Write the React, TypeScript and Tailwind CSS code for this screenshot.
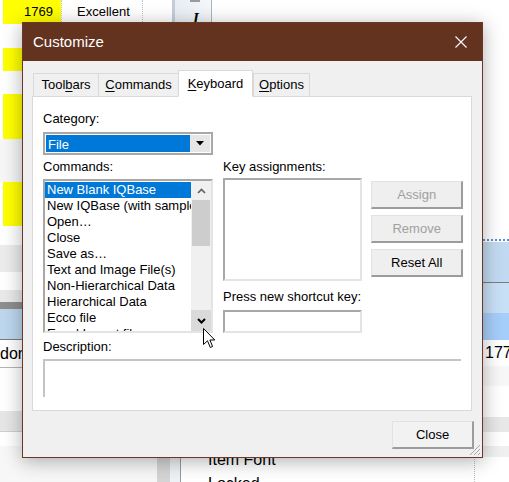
import React from "react";

const COMMANDS = [
  "New Blank IQBase",
  "New IQBase (with sample data)",
  "Open…",
  "Close",
  "Save as…",
  "Text and Image File(s)",
  "Non-Hierarchical Data",
  "Hierarchical Data",
  "Ecco file",
  "Excel Import file",
];

const btn =
  "flex items-center justify-center bg-[#efefef] border border-t-[#e2e2e2] border-l-[#e2e2e2] border-b-2 border-r-2 border-b-[#9c9c9c] border-r-[#9c9c9c] text-[13px]";

const sunken =
  "bg-white border-2 border-t-[#a8a8a8] border-l-[#a8a8a8] border-r-[#e4e4e4] border-b-[#e4e4e4]";

const Background = () => (
  <div className="flex flex-col h-full">
    <div className="flex h-[446px] shrink-0 overflow-hidden">
      {/* left column of the sheet */}
      <div className="w-[61px] shrink-0 flex flex-col">
        <div className="h-[24px] ml-[3px] bg-[#ffff00] flex items-center justify-end pr-[8px] text-[13px]">1769</div>
        <div className="h-[24px]" />
        <div className="h-[23px] ml-[3px] bg-[#ffff00]" />
        <div className="h-[23px]" />
        <div className="h-[45px] ml-[3px] bg-[#ffff00]" />
        <div className="h-[43px] bg-[#f6f6f6]" />
        <div className="h-[44px] ml-[3px] bg-[#ffff00]" />
        <div className="h-[19px]" />
        <div className="h-[27px] bg-[#ececec]" />
        <div className="h-[18px]" />
        <div className="h-[12px] bg-[#e9e9e9]" />
        <div className="h-[7px] bg-[#8e8e8e]" />
        <div className="h-[31px] bg-[#bdd7ee] border-b border-[#7a7a7a]" />
        <div className="h-[28px] flex items-center text-[16px] border-b border-[#b4b4b4]">dor</div>
        <div className="h-[43px]" />
        <div className="h-[21px] bg-[#e6e6e6] border-b border-[#cfcfcf]" />
      </div>
      {/* second column */}
      <div className="w-[111px] shrink-0 flex flex-col border-l border-dotted border-[#c8c8c8]">
        <div className="h-[24px] flex">
          <div className="w-[81px] flex items-center pl-[15px] text-[13px] border-r border-dotted border-[#c0c0c0]">Excellent</div>
        </div>
      </div>
      {/* toolbar strip */}
      <div className="w-[40px] shrink-0 flex flex-col border-l-[3px] border-[#c4cdd8] border-r border-r-[#b0b4b8] bg-gradient-to-r from-[#e9eef4] to-[#f4f7fa]">
        <div className="ml-[15px] w-[10px] h-[2px] bg-[#9a9a9a]" />
        <div className="pl-[18px] pt-[9px] text-[15px] font-bold italic font-['Liberation_Serif',serif] leading-none">I</div>
      </div>
      {/* right area */}
      <div className="flex-1 min-w-0 overflow-hidden flex flex-col">
        <div className="h-[239px]" />
        <div className="h-[3px] border-t-2 border-dotted border-[#5b8fd0]" />
        <div className="h-[41px] bg-[#c2daf1] border-b border-[#7d7d7d]" />
        <div className="h-[30px] bg-[#c8e0f6]" />
        <div className="h-[27px] bg-[#a6cefa]" />
        <div className="h-[26px] flex items-center pl-[273px] text-[16px] whitespace-nowrap">1775</div>
        <div className="h-[20px] bg-[#f7f7f7]" />
        <div className="h-[31px]" />
        <div className="h-[15px] bg-[#e8e8e8]" />
      </div>
    </div>
    <div className="flex flex-1 overflow-hidden">
      <div className="w-[157px] shrink-0 bg-[#f7f7f7]" />
      <div className="w-[13px] shrink-0 bg-[#d5d5d5]" />
      <div className="w-[11px] shrink-0 bg-[#eef1f5] border-r border-[#9a9a9a]" />
      <div className="w-[294px] shrink-0 border-r border-dotted border-[#b8b8b8] pt-[2px] text-[16px]">
        <div className="h-[24px] flex items-center pl-[27px]">Item Font</div>
        <div className="h-[24px] flex items-center pl-[27px]">Locked</div>
      </div>
      <div className="flex-1 flex flex-col">
        <div className="h-[11px] bg-[#f0f0f0]" />
      </div>
    </div>
  </div>
);

const Tab = ({ label, u, width, selected }: { label: string; u: number; width: string; selected?: boolean }) => (
  <div
    className={`${width} flex items-center justify-center border border-[#d9d9d9] text-[13px] ${
      selected ? "h-[27px] bg-white border-b-white relative z-10" : "h-[24px] bg-[#f0f0f0] -mr-px"
    }`}
  >
    <span>
      {label.slice(0, u)}
      <span className="underline underline-offset-2">{label[u]}</span>
      {label.slice(u + 1)}
    </span>
  </div>
);

const CommandList = () => (
  <div className={`${sunken} h-[154px] flex overflow-hidden`}>
    <div className="flex-1 overflow-hidden pt-px">
      {COMMANDS.map((c, i) => (
        <div
          key={c}
          className={`h-[16px] leading-[16px] pl-[2px] whitespace-nowrap text-[13px] ${
            i === 0 ? "bg-[#0078d7] text-white" : ""
          }`}
        >
          {c}
        </div>
      ))}
    </div>
    <div className="w-[20px] bg-[#f0f0f0] flex flex-col">
      <div className="h-[19px] flex items-center justify-center">
        <svg width="9" height="6" viewBox="0 0 9 6">
          <path d="M1 5 L4.5 1.5 L8 5" stroke="#606060" strokeWidth="1.6" fill="none" />
        </svg>
      </div>
      <div className="mx-[1px] h-[46px] bg-[#cdcdcd]" />
      <div className="flex-1" />
      <div className="h-[21px] bg-[#dadada] flex items-center justify-center">
        <svg width="9" height="6" viewBox="0 0 9 6">
          <path d="M1 1 L4.5 4.5 L8 1" stroke="#000" strokeWidth="2" fill="none" />
        </svg>
      </div>
    </div>
  </div>
);

const Dialog = () => (
  <div className="absolute left-[22px] top-[22px] w-[461px] h-[436px] border border-[#6a3823] bg-[#f0f0f0] shadow-[0_3px_18px_rgba(0,0,0,0.32)] flex flex-col">
    <div className="h-[38px] bg-[#633320] flex items-center justify-between pl-[10px] pr-[15px] text-white">
      <span className="text-[15px]">Customize</span>
      <svg width="12" height="12" viewBox="0 0 12 12">
        <path d="M0.5 0.5 L11.5 11.5 M11.5 0.5 L0.5 11.5" stroke="#fff" strokeWidth="1.1" />
      </svg>
    </div>
    <div className="flex-1 flex flex-col pt-[9px] pl-[9px] pr-[10px] relative">
      <div className="flex items-end pl-[1px] -mb-px">
        <Tab label="Toolbars" u={4} width="w-[66px]" />
        <Tab label="Commands" u={0} width="w-[81px]" />
        <Tab label="Keyboard" u={0} width="w-[75px]" selected />
        <Tab label="Options" u={0} width="w-[57px]" />
      </div>
      <div className="h-[315px] bg-white border border-[#d9d9d9] pl-[10px] pr-[8px] pt-[14px]">
        <div className="flex">
          <div className="w-[170px] flex flex-col">
            <div className="h-[16px] leading-[16px] text-[13px]">Category:</div>
            <div className="mt-[5px] h-[23px] border-2 border-[#a8a8a8] flex p-px bg-white">
              <div className="flex-1 bg-[#0078d7] text-white text-[13px] leading-[19px] pl-[2px]">File</div>
              <div className="w-[20px] bg-[#e6e6e6] flex items-center justify-center">
                <svg width="8" height="5" viewBox="0 0 8 5">
                  <path d="M0 0 L8 0 L4 4.5 Z" fill="#000" />
                </svg>
              </div>
            </div>
            <div className="mt-[4px] h-[16px] leading-[16px] text-[13px]">Commands:</div>
            <div className="mt-[4px]">
              <CommandList />
            </div>
          </div>
          <div className="w-[140px] ml-[10px] flex flex-col pt-[48px]">
            <div className="h-[16px] leading-[16px] text-[13px]">Key assignments:</div>
            <div className={`${sunken} mt-[3px] h-[103px]`} />
            <div className="mt-[8px] h-[16px] leading-[16px] text-[13px]">Press new shortcut key:</div>
            <div className={`${sunken} mt-[5px] h-[23px]`} />
          </div>
          <div className="w-[92px] ml-[9px] flex flex-col gap-[6px] pt-[70px]">
            <div className={`${btn} h-[28px] text-[#a0a0a0]`}>Assign</div>
            <div className={`${btn} h-[28px] text-[#a0a0a0]`}>Remove</div>
            <div className={`${btn} h-[28px]`}>Reset All</div>
          </div>
        </div>
        <div className="mt-[6px] h-[16px] leading-[16px] text-[13px]">Description:</div>
        <div className="mt-[4px] mr-[2px] h-[38px] bg-white border-t-2 border-l-2 border-[#c4c4c4]" />
      </div>
      <div className="flex justify-end mt-[10px] -mr-[2px]">
        <div className={`${btn} w-[82px] h-[28px] bg-[#f2f2f2]`}>Close</div>
      </div>
      <svg className="absolute right-[1px] bottom-[1px]" width="13" height="13" viewBox="0 0 13 13">
        <path d="M12 2 L2 12 M12 6 L6 12 M12 10 L10 12" stroke="#a8a8a8" strokeWidth="1" />
      </svg>
    </div>
  </div>
);

export default function App() {
  return (
    <div className="relative w-[509px] h-[482px] overflow-hidden bg-white text-black font-['Liberation_Sans',Arial,sans-serif]">
      <Background />
      <Dialog />
      <svg className="absolute left-[203px] top-[328px]" width="13" height="21" viewBox="0 0 13 21">
        <path d="M0.5 0.5 L0.5 16.5 L4.5 12.8 L7.3 19.5 L9.6 18.5 L6.9 12 L11.8 12 Z" fill="#fff" stroke="#000" strokeWidth="1" strokeLinejoin="miter" />
      </svg>
    </div>
  );
}
